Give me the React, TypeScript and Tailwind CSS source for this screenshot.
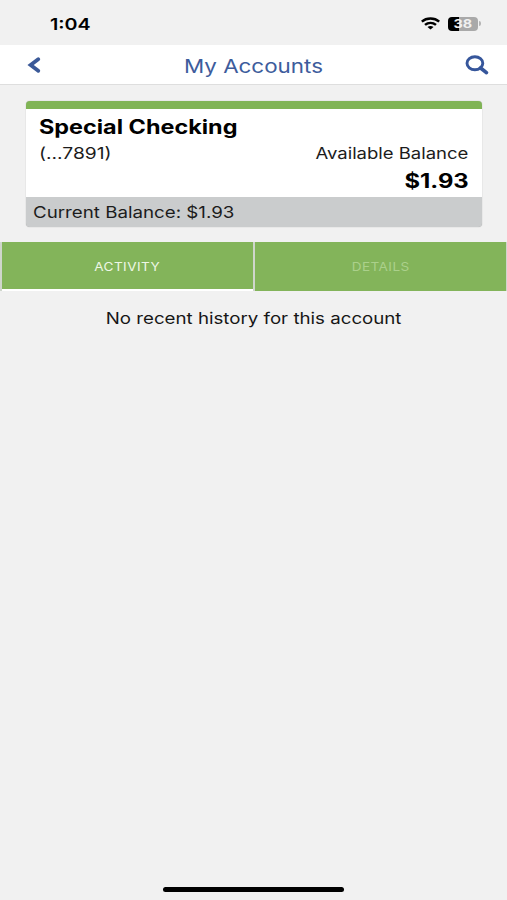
import { useState } from 'react';

const account = {
  name: 'Special Checking',
  mask: '(...7891)',
  available: '$1.93',
  current: '$1.93',
};

function StatusBar() {
  return (
    <div className="flex h-[45px] items-center justify-between pl-[50px] pr-[26px] pt-[2px]">
      <span className="origin-left scale-x-[1.23] text-[16px] leading-5 font-semibold text-black">1:04</span>
      <div className="flex items-center gap-[8px]">
        <svg width="19" height="13" viewBox="0 0 19 13" fill="none" stroke="#000" strokeWidth="2.5">
          <path d="M.8 4.6C5.6.5 13.4.5 18.2 4.6" />
          <path d="M4 7.9c3.2-2.7 7.8-2.7 11 0" />
          <path d="M6.5 10c1.7-1.4 4.3-1.4 6 0l-3 2.5z" fill="#000" stroke="none" />
        </svg>
        <div className="flex items-center gap-px">
          <div className="flex h-[14px] w-[30px] items-center justify-center rounded-[4px] bg-linear-to-r from-black from-38% to-[#a9a9a9] to-38%">
            <span className="scale-x-[1.2] text-[12px] leading-none font-bold text-[#f1f1f1]">38</span>
          </div>
          <div className="h-[5px] w-[2px] rounded-r-full bg-[#b5b5b5]" />
        </div>
      </div>
    </div>
  );
}

function Header() {
  return (
    <header className="flex h-[40px] items-center justify-between border-b border-[#dedede] bg-white pl-[27px] pr-[18px] pt-px">
      <button type="button" aria-label="Back" className="w-[14px]">
        <svg width="14" height="16" viewBox="0 0 14 16" fill="none" stroke="#3b5998" strokeWidth="3.8">
          <path d="M11.2 2.2 3.6 8l7.6 5.8" strokeLinecap="round" />
        </svg>
      </button>
      <h1 className="mt-px scale-x-[1.21] text-[18.5px] leading-6 text-[#3d5c9c]">My Accounts</h1>
      <button type="button" aria-label="Search">
        <svg width="24" height="20" viewBox="0 0 24 20" fill="none" stroke="#36569b">
          <ellipse cx="9.9" cy="8.2" rx="7.9" ry="6.5" strokeWidth="2.9" />
          <path d="m15.6 13 5.8 4.6" strokeWidth="3.7" strokeLinecap="round" />
        </svg>
      </button>
    </header>
  );
}

function AccountCard() {
  return (
    <section className="ml-[26px] mr-[25px] mt-[16px] h-[126px] overflow-hidden rounded-[4px] bg-[#cacccd] text-[16px] text-[#1c1c1c] leading-5 shadow-[0_0_1px_#999]">
      <div className="h-[8px] bg-[#80b455]" />
      <div className="h-[88px] bg-white pl-[13px] pr-[13.5px] pt-[6px]">
        <h2 className="w-fit origin-left scale-x-[1.2] text-[19.5px] leading-6 font-bold text-black">{account.name}</h2>
        <div className="mt-[4px] flex justify-between">
          <span className="origin-left scale-x-[1.2]">{account.mask}</span>
          <span className="origin-right scale-x-[1.155]">Available Balance</span>
        </div>
        <p className="ml-auto mt-[6px] w-fit origin-right scale-x-[1.22] text-[19.5px] leading-6 font-bold text-black">
          {account.available}
        </p>
      </div>
      <p className="ml-[7px] mt-[5px] w-fit origin-left scale-x-[1.17]">Current Balance: {account.current}</p>
    </section>
  );
}

export default function App() {
  const [tab, setTab] = useState<'activity' | 'details'>('activity');

  return (
    <div className="flex h-[900px] w-[507px] flex-col overflow-hidden bg-[#f1f1f1] font-[Inter,sans-serif]">
      <StatusBar />
      <Header />
      <AccountCard />
      <div className="mt-[15px] flex h-[49px] gap-[2px] bg-[#cfd6cc] px-[2px] pr-px text-[12px] tracking-[0.4px]">
        {(['activity', 'details'] as const).map((name) => (
          <button
            key={name}
            type="button"
            onClick={() => setTab(name)}
            className={`flex-1 border-b-2 bg-[#83b45a] pt-[2px] uppercase ${
              tab === name ? 'border-white text-[#eef7e6]' : 'border-[#83b45a] text-[#abd08b]'
            }`}
          >
            <span className="inline-block scale-x-[1.13]">{name}</span>
          </button>
        ))}
      </div>
      <p className="mx-auto mt-[17px] scale-x-[1.168] text-[16px] leading-5 text-[#161616]">
        {tab === 'activity' ? 'No recent history for this account' : 'No details for this account'}
      </p>
      <div className="mx-auto mt-auto mb-[8px] h-[5px] w-[181px] rounded-full bg-black" />
    </div>
  );
}
